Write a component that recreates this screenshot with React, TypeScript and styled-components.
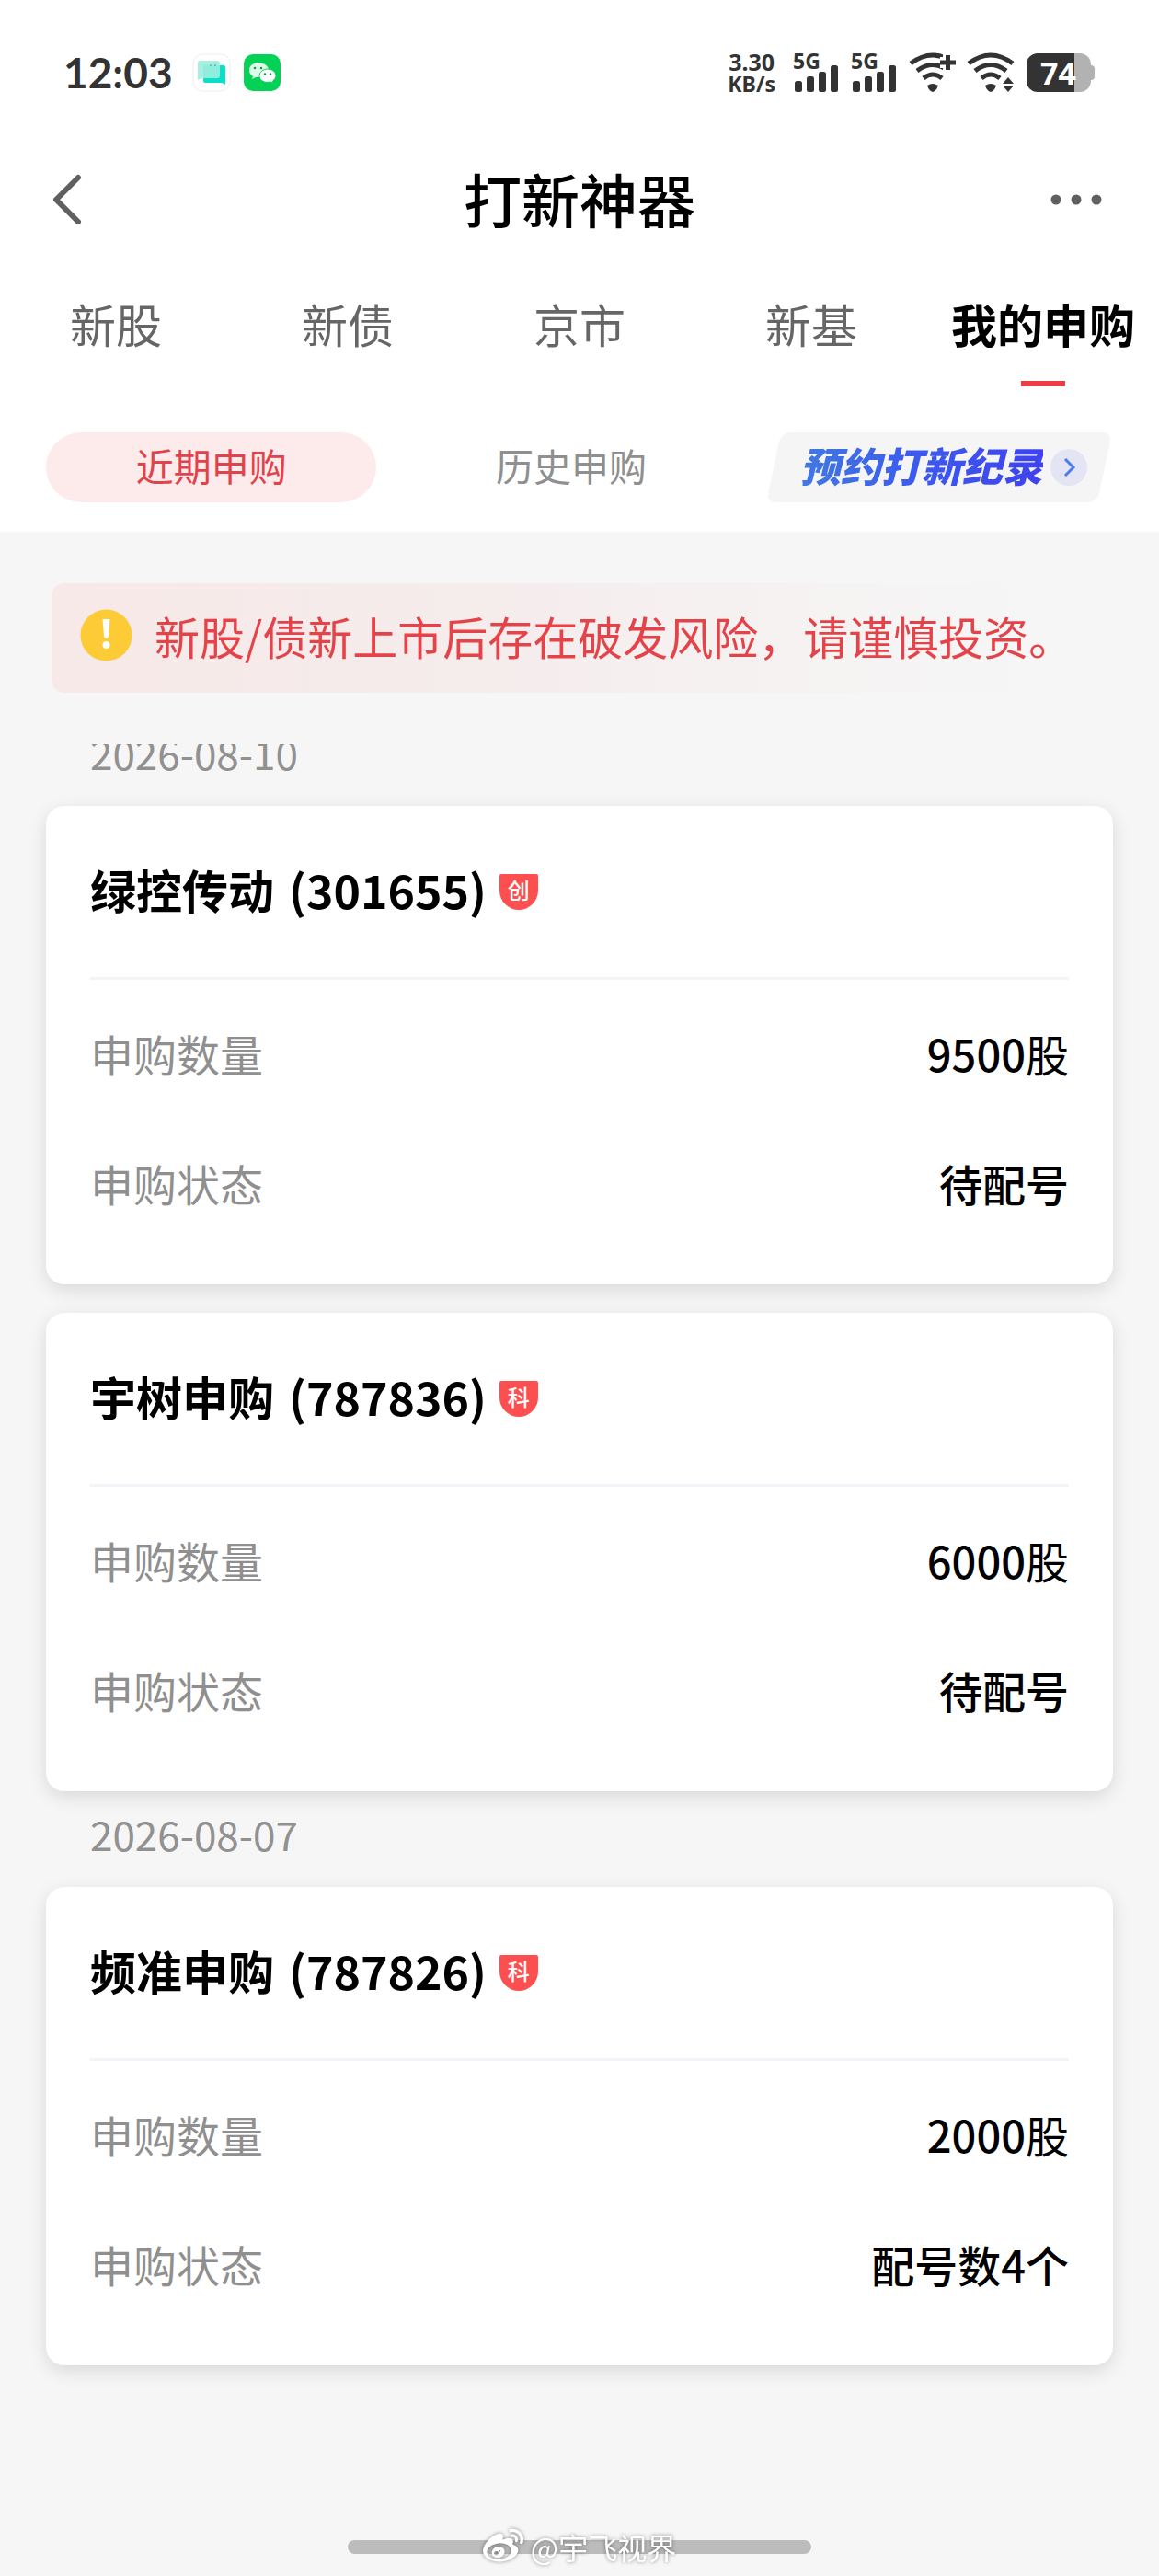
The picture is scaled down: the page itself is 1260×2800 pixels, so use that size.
import React from 'react';
import styled, { createGlobalStyle, css } from 'styled-components';
import { FaWeibo } from 'react-icons/fa';

const GlobalStyle = createGlobalStyle`
  *, *::before, *::after { box-sizing: border-box; }
  body { margin: 0; background: #f6f6f6; }
  button { border: 0; padding: 0; background: none; font: inherit; color: inherit; cursor: pointer; }
  h1, h2, p, dl, dd, dt { margin: 0; font: inherit; }
`;

const Page = styled.div`
  min-height: 100vh;
  display: flex;
  flex-direction: column;
  background: #f6f6f6;
  color: #000;
  font-family: 'Noto Sans CJK SC', sans-serif;
`;

const Top = styled.header`
  background: #fff;
  padding-bottom: 32px;
`;

const StatusBar = styled.div`
  display: flex;
  align-items: center;
  justify-content: space-between;
  height: 158px;
  padding: 0 70px 0 69px;
  color: #333;
  font-family: 'Noto Sans', sans-serif;
  font-weight: 700;
`;

const StatusGroup = styled.div<{ $gap: number }>`
  display: flex;
  align-items: center;
  gap: ${(p) => p.$gap}px;
`;

const Clock = styled.time`
  font-family: Lato, sans-serif;
  font-size: 46px;
  line-height: 56px;
  margin-right: 8px;
`;

const Speed = styled.div`
  display: flex;
  flex-direction: column;
  align-items: center;
  font-size: 25px;
  line-height: 24px;
  margin-right: 8px;
  small { font-size: 23px; }
`;

const Battery = styled.div`
  display: flex;
  align-items: center;
`;

const BatteryBody = styled.div`
  width: 70px;
  height: 42px;
  border-radius: 12px;
  background: linear-gradient(90deg, #333 0 52px, #b2b2b2 52px);
  color: #fff;
  font-size: 34px;
  line-height: 42px;
  padding-left: 15px;
`;

const BatteryTip = styled.div`
  width: 4px;
  height: 16px;
  border-radius: 0 4px 4px 0;
  background: #b2b2b2;
`;

const TitleBar = styled.div`
  display: grid;
  grid-template-columns: 1fr auto 1fr;
  align-items: center;
  height: 118px;
  padding: 0 58px;
  color: #606060;
`;

const Title = styled.h1`
  color: #000;
  font-size: 63px;
  font-weight: 500;
  line-height: 90px;
  padding-bottom: 4px;
`;

const IconButton = styled.button<{ $end?: boolean }>`
  display: flex;
  justify-self: ${(p) => (p.$end ? 'end' : 'start')};
`;

const Tabs = styled.nav`
  display: grid;
  grid-template-columns: repeat(5, 1fr);
  padding-top: 37px;
`;

const Tab = styled.button<{ $active?: boolean }>`
  display: flex;
  flex-direction: column;
  align-items: center;
  gap: 25px;
  height: 107px;
  font-size: 50px;
  line-height: 76px;
  white-space: nowrap;
  color: ${(p) => (p.$active ? '#000' : '#666')};
  font-weight: ${(p) => (p.$active ? 700 : 400)};
  ${(p) => p.$active && css`
    &::after {
      content: '';
      width: 48px;
      height: 6px;
      background: #ed3c45;
    }
  `}
`;

const Filters = styled.div`
  display: grid;
  grid-template-columns: 359fr 359fr 376fr;
  gap: 32px;
  padding: 50px 51px 0 50px;
`;

const Filter = styled.button<{ $active?: boolean }>`
  height: 76px;
  padding-bottom: 6px;
  border-radius: 38px;
  font-size: 41px;
  line-height: 60px;
  color: ${(p) => (p.$active ? '#e0434b' : '#8f8f8f')};
  background: ${(p) => (p.$active ? '#fdebeb' : 'transparent')};
`;

const Reserve = styled.a`
  position: relative;
  display: flex;
  align-items: center;
  justify-content: center;
  gap: 8px;
  height: 76px;
  padding-left: 10px;
  text-decoration: none;
  isolation: isolate;
  &::before {
    content: '';
    position: absolute;
    z-index: -1;
    inset: 0 8px;
    border-radius: 10px;
    background: #f5f5f5;
    transform: skewX(-12deg);
  }
`;

const ReserveText = styled.span`
  padding-bottom: 6px;
  font-size: 44px;
  line-height: 60px;
  font-weight: 900;
  font-style: italic;
  white-space: nowrap;
  color: transparent;
  background: linear-gradient(90deg, #4179e0, #3c5cee 45%, #3f42ee);
  background-clip: text;
  -webkit-background-clip: text;
`;

const Content = styled.main`
  flex: 1;
`;

const Notice = styled.p`
  display: flex;
  align-items: center;
  gap: 24px;
  height: 119px;
  margin: 56px;
  padding: 0 0 6px 31px;
  border-radius: 14px;
  background: linear-gradient(90deg, #f7e9e8, #f5ecec 40%, #f6f6f6 92%);
  color: #e4434a;
  font-size: 49px;
  line-height: 72px;
  white-space: nowrap;
  svg { flex: none; }
`;

const List = styled.div`
  overflow: hidden;
  padding: 0 50px 60px;
`;

const Group = styled.section`
  &:first-child { margin-top: -37px; }
`;

const DateLabel = styled.h2`
  height: 104px;
  padding-left: 48px;
  color: #919191;
  font-size: 44px;
  line-height: 92px;
`;

const Cards = styled.div`
  display: grid;
  gap: 31px;
`;

const Card = styled.article`
  padding: 0 48px 40px;
  border-radius: 20px;
  background: #fff;
  box-shadow: 0 6px 20px rgba(0, 0, 0, 0.12);
`;

const CardHead = styled.div`
  display: flex;
  align-items: center;
  gap: 14px;
  height: 189px;
  border-bottom: 3px solid #f3f4f8;
`;

const Name = styled.h2`
  display: flex;
  gap: 16px;
  padding-bottom: 6px;
  font-size: 50px;
  font-weight: 700;
  line-height: 72px;
`;

const Board = styled.span`
  width: 42px;
  height: 39px;
  border-radius: 2px 2px 21px 21px;
  background: #fd4f4f;
  color: #fff;
  font-size: 24px;
  font-weight: 500;
  line-height: 34px;
  text-align: center;
`;

const Facts = styled.dl`
  padding-top: 9px;
`;

const Fact = styled.div`
  display: flex;
  align-items: center;
  justify-content: space-between;
  height: 141px;
  font-size: 47px;
  line-height: 68px;
`;

const Term = styled.dt`
  color: #8f8f8f;
`;

const Value = styled.dd`
  font-weight: 500;
`;

const Unit = styled.span`
  font-weight: 400;
`;

const Footer = styled.footer`
  display: grid;
  place-items: center;
  height: 64px;
  & > * { grid-area: 1 / 1; }
`;

const HomeBar = styled.div`
  width: 40%;
  height: 15px;
  border-radius: 8px;
  background: #bcbcbc;
`;

const Watermark = styled.div`
  display: flex;
  align-items: center;
  gap: 8px;
  color: #fff;
  font-size: 32px;
  line-height: 48px;
  filter: drop-shadow(0 0 2px rgba(0, 0, 0, 0.45));
`;

const Signal = () => (
  <svg width="52" height="44" viewBox="0 0 52 44" overflow="visible" fill="#333" role="img" aria-label="5G">
    <text x="0" y="18" fontSize="23" fontWeight="700" fontFamily="Noto Sans">5G</text>
    <rect x="2" y="31" width="8" height="12" rx="2.5" />
    <rect x="15" y="26" width="8" height="17" rx="2.5" />
    <rect x="28" y="21" width="8" height="22" rx="2.5" />
    <rect x="41" y="14" width="8" height="29" rx="2.5" />
  </svg>
);

const WifiArcs = () => (
  <>
    <path d="M2 12 Q26 -6 50 12" />
    <path d="M9 20 Q26 7 43 20" />
    <path d="M16 28 Q26 20 36 28" />
    <path d="M20 36 Q26 32 32 36 Q30 42 26 43 Q22 42 20 36Z" fill="#333" stroke="none" />
  </>
);

const WifiPlus = () => (
  <svg width="52" height="44" viewBox="0 0 52 44" fill="none" stroke="#333" strokeWidth="5" aria-hidden="true">
    <WifiArcs />
    <path d="M34 11H52M43 1V22" stroke="#fff" strokeWidth="12" />
    <path d="M34 11H51M42.500 3V19" />
  </svg>
);

const WifiData = () => (
  <svg width="54" height="44" viewBox="0 0 54 44" fill="none" stroke="#333" strokeWidth="5" aria-hidden="true">
    <WifiArcs />
    <path d="M45 24L54 34L45 44L36 34Z" fill="#fff" stroke="none" />
    <path d="M45 27L51 34H39Z M45 43L51 36H39Z" fill="#333" stroke="none" />
  </svg>
);

const ChatApp = () => (
  <svg width="42" height="42" viewBox="0 0 42 42" aria-hidden="true">
    <rect x="1" y="1" width="40" height="40" rx="10" fill="#fff" stroke="#eee" />
    <path d="M12 15q0-2 2-2h20q2 0 2 2v19l-4-2H14q-2 0-2-2z" fill="#0adfc8" />
    <path d="M6 10q0-2 2-2h19q3 0 3 3v13q0 3-3 3H11l-5 2z" fill="#9deedd" fillOpacity=".9" />
    <path d="M20 12v2M25 12v2" stroke="#3a9c8c" />
  </svg>
);

const WeChatApp = () => (
  <svg width="42" height="42" viewBox="0 0 42 42" aria-hidden="true">
    <rect x="1" y="1" width="40" height="40" rx="10" fill="#04d257" />
    <path d="M17 10c-6 0-10 4-10 8 0 3 1 5 4 7l-1 3 4-2 4 0c6 0 10-4 10-8s-5-8-11-8z" fill="#dffbea" />
    <path d="M27 17c-5 0-9 3.500-9 7.500s4 7 9 7l3-.5 3 1.500-.5-2.500c2-1.500 3.500-3.500 3.500-5.500 0-4-4-7.500-9-7.500z" fill="#fff" stroke="#04d257" />
    <g fill="#0aa04a">
      <circle cx="13" cy="16" r="1.300" /><circle cx="20" cy="16" r="1.300" />
      <circle cx="24" cy="22.500" r="1.200" /><circle cx="30" cy="22.500" r="1.200" />
    </g>
  </svg>
);

const BackIcon = () => (
  <svg width="32" height="56" viewBox="0 0 32 56" fill="none" stroke="#606060" strokeWidth="6" strokeLinecap="round" strokeLinejoin="round" aria-hidden="true">
    <path d="M27 4L3 28L27 52" />
  </svg>
);

const MoreIcon = () => (
  <svg width="60" height="12" viewBox="0 0 60 12" fill="#606060" aria-hidden="true">
    <circle cx="6" cy="6" r="5.500" /><circle cx="28" cy="6" r="5.500" /><circle cx="50" cy="6" r="5.500" />
  </svg>
);

const GoIcon = () => (
  <svg width="40" height="40" viewBox="0 0 40 40" fill="none" aria-hidden="true">
    <circle cx="20" cy="20" r="20" fill="#e3e5f5" />
    <path d="M16 11L25 20L16 29" stroke="#4a7df0" strokeWidth="3" />
  </svg>
);

const WarnIcon = () => (
  <svg width="57" height="57" viewBox="0 0 57 57" aria-hidden="true">
    <circle cx="28.500" cy="28.500" r="28" fill="#fdcb35" />
    <path d="M24.500 11h8l-1.500 19q-2.500 4-5 0z" fill="#fff" />
    <circle cx="28.500" cy="39" r="4" fill="#fff" />
  </svg>
);

type Subscription = {
  name: string;
  code: string;
  board: string;
  shares: number;
  status: string;
};

const groups: { date: string; items: Subscription[] }[] = [
  {
    date: '2026-08-10',
    items: [
      { name: '绿控传动', code: '301655', board: '创', shares: 9500, status: '待配号' },
      { name: '宇树申购', code: '787836', board: '科', shares: 6000, status: '待配号' },
    ],
  },
  {
    date: '2026-08-07',
    items: [{ name: '频准申购', code: '787826', board: '科', shares: 2000, status: '配号数4个' }],
  },
];

const tabs = ['新股', '新债', '京市', '新基', '我的申购'];

const SubscriptionCard = ({ item }: { item: Subscription }) => (
  <Card>
    <CardHead>
      <Name>
        <span>{item.name}</span>
        <span>({item.code})</span>
      </Name>
      <Board>{item.board}</Board>
    </CardHead>
    <Facts>
      <Fact>
        <Term>申购数量</Term>
        <Value>{item.shares}<Unit>股</Unit></Value>
      </Fact>
      <Fact>
        <Term>申购状态</Term>
        <Value>{item.status}</Value>
      </Fact>
    </Facts>
  </Card>
);

export default function App() {
  const [tab, setTab] = React.useState('我的申购');
  const [filter, setFilter] = React.useState('近期申购');

  return (
    <Page>
      <GlobalStyle />
      <Top>
        <StatusBar>
          <StatusGroup $gap={13}>
            <Clock>12:03</Clock>
            <ChatApp />
            <WeChatApp />
          </StatusGroup>
          <StatusGroup $gap={11}>
            <Speed>3.30<small>KB/s</small></Speed>
            <Signal />
            <Signal />
            <WifiPlus />
            <WifiData />
            <Battery>
              <BatteryBody>74</BatteryBody>
              <BatteryTip />
            </Battery>
          </StatusGroup>
        </StatusBar>
        <TitleBar>
          <IconButton aria-label="返回"><BackIcon /></IconButton>
          <Title>打新神器</Title>
          <IconButton $end aria-label="更多"><MoreIcon /></IconButton>
        </TitleBar>
        <Tabs>
          {tabs.map((name) => (
            <Tab key={name} $active={name === tab} onClick={() => setTab(name)}>{name}</Tab>
          ))}
        </Tabs>
        <Filters>
          {['近期申购', '历史申购'].map((name) => (
            <Filter key={name} $active={name === filter} onClick={() => setFilter(name)}>{name}</Filter>
          ))}
          <Reserve href="#reserve">
            <ReserveText>预约打新纪录</ReserveText>
            <GoIcon />
          </Reserve>
        </Filters>
      </Top>
      <Content>
        <Notice><WarnIcon />新股/债新上市后存在破发风险，请谨慎投资。</Notice>
        <List>
          {groups.map((group) => (
            <Group key={group.date}>
              <DateLabel>{group.date}</DateLabel>
              <Cards>
                {group.items.map((item) => <SubscriptionCard key={item.code} item={item} />)}
              </Cards>
            </Group>
          ))}
        </List>
      </Content>
      <Footer>
        <HomeBar />
        <Watermark><FaWeibo size={44} aria-hidden="true" />@宇飞视界</Watermark>
      </Footer>
    </Page>
  );
}
